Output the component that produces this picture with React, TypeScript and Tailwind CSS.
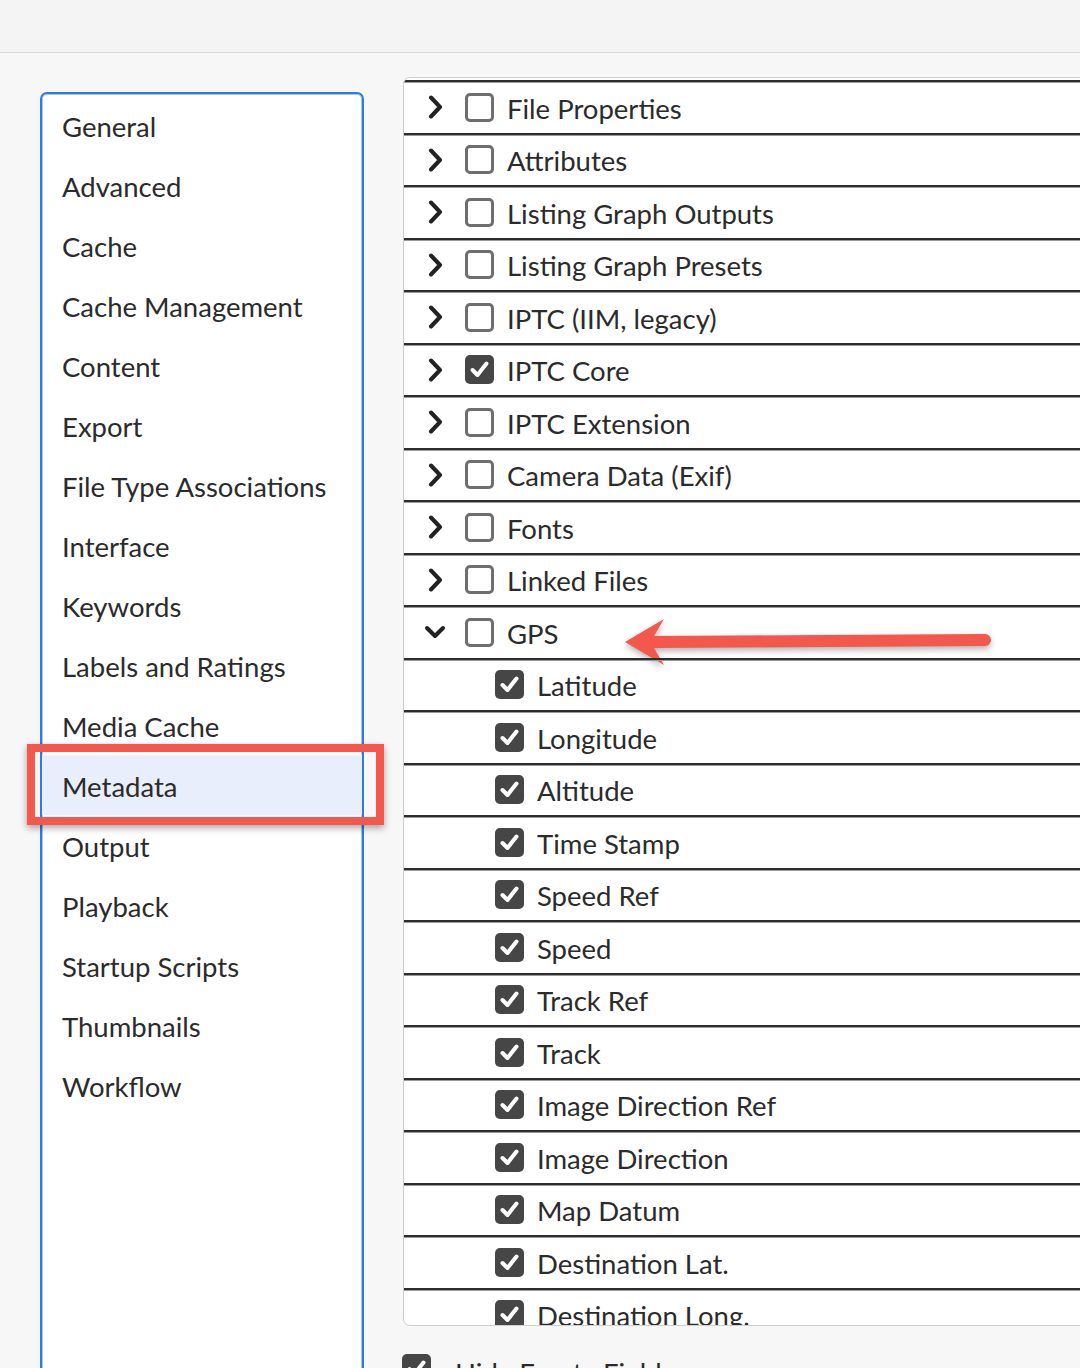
import React from 'react';

const prefs = [
  'General',
  'Advanced',
  'Cache',
  'Cache Management',
  'Content',
  'Export',
  'File Type Associations',
  'Interface',
  'Keywords',
  'Labels and Ratings',
  'Media Cache',
  'Metadata',
  'Output',
  'Playback',
  'Startup Scripts',
  'Thumbnails',
  'Workflow',
];

type Row = { label: string; checked: boolean; child?: boolean; open?: boolean };

const groups: Row[] = [
  { label: 'File Properties', checked: false },
  { label: 'Attributes', checked: false },
  { label: 'Listing Graph Outputs', checked: false },
  { label: 'Listing Graph Presets', checked: false },
  { label: 'IPTC (IIM, legacy)', checked: false },
  { label: 'IPTC Core', checked: true },
  { label: 'IPTC Extension', checked: false },
  { label: 'Camera Data (Exif)', checked: false },
  { label: 'Fonts', checked: false },
  { label: 'Linked Files', checked: false },
  { label: 'GPS', checked: false, open: true },
];

const gpsFields = [
  'Latitude',
  'Longitude',
  'Altitude',
  'Time Stamp',
  'Speed Ref',
  'Speed',
  'Track Ref',
  'Track',
  'Image Direction Ref',
  'Image Direction',
  'Map Datum',
  'Destination Lat.',
  'Destination Long.',
];

const rows: Row[] = [...groups, ...gpsFields.map((label) => ({ label, checked: true, child: true }))];

const Checkbox = ({ checked }: { checked: boolean }) =>
  checked ? (
    <span className="w-[29px] h-[29px] rounded-[5px] bg-[#464646] flex items-center justify-center flex-shrink-0">
      <svg width="29" height="29" viewBox="0 0 29 29">
        <path d="M7.5 15 L12.5 20 L21.5 8.5" fill="none" stroke="#fff" strokeWidth="4" strokeLinecap="round" strokeLinejoin="round" />
      </svg>
    </span>
  ) : (
    <span className="w-[29px] h-[29px] rounded-[5px] border-[3px] border-[#6e6e6e] bg-white flex-shrink-0" />
  );

const Chevron = ({ open }: { open?: boolean }) => (
  <svg width="24" height="24" viewBox="0 0 24 24" className="flex-shrink-0">
    {open ? (
      <path d="M4 8 L12 16 L20 8" fill="none" stroke="#222" strokeWidth="4" strokeLinecap="round" strokeLinejoin="round" />
    ) : (
      <path d="M8 2.5 L17 12 L8 21.5" fill="none" stroke="#222" strokeWidth="4" strokeLinecap="round" strokeLinejoin="round" />
    )}
  </svg>
);

export default function App() {
  return (
    <div className="relative w-[1080px] h-[1368px] overflow-hidden bg-[#f7f7f7] font-[Lato,sans-serif] text-[#2b2b2b]">
      {/* window title strip */}
      <div className="h-[53px] bg-[#f4f4f4] border-b border-[#d9d9d9]" />

      <div className="flex">
        {/* Preferences categories */}
        <div className="ml-[40px] mt-[39px] w-[324px] h-[1300px] bg-white border-2 border-[#2c7de0] rounded-t-[7px] shadow-[inset_0_0_0_1px_#a3c8f5] pt-[1px] flex-shrink-0">
          {prefs.map((p) => {
            const active = p === 'Metadata';
            return (
              <div
                key={p}
                className={`relative h-[60px] flex items-center pl-[20px] pt-[4px] text-[27.5px] ${active ? 'bg-[#e8eefb]' : ''}`}
              >
                {p}
                {active && (
                  <div className="absolute left-[-15px] top-[-11px] w-[357px] h-[81px] border-[8px] border-[#f4574b] shadow-[0_3px_7px_rgba(0,0,0,0.35)]" />
                )}
              </div>
            );
          })}
        </div>

        {/* Metadata panel */}
        <div className="ml-[39px] mt-[24px] flex flex-col flex-shrink-0">
          <div className="w-[720px] h-[1249px] bg-white border border-[#cfcfcf] rounded-[7px] overflow-hidden pt-[2px]">
            {rows.map((r) => (
              <div
                key={r.label}
                className="relative h-[52.5px] border-t-2 border-[#2d2d2d] shadow-[inset_0_1px_0_#9a9a9a] flex items-center text-[27.5px]"
              >
                {r.child ? (
                  <div className="flex items-center pl-[91px]">
                    <Checkbox checked={r.checked} />
                    <span className="ml-[13px] pt-[2px]">{r.label}</span>
                  </div>
                ) : (
                  <div className="flex items-center pl-[19px]">
                    <Chevron open={r.open} />
                    <span className="ml-[18px] flex">
                      <Checkbox checked={r.checked} />
                    </span>
                    <span className="ml-[13px] pt-[2px]">{r.label}</span>
                  </div>
                )}
                {r.open && (
                  <svg
                    className="absolute left-[214px] top-[-10px] drop-shadow-[0_3px_3px_rgba(0,0,0,0.3)]"
                    width="380"
                    height="70"
                    viewBox="0 0 380 70"
                  >
                    <path
                      d="M7 45 L46 22 Q40 32 36 39 L367 37 A6 6 0 0 1 367 49 L36 51 Q40 58 46 68 Z"
                      fill="#f4574b"
                    />
                  </svg>
                )}
              </div>
            ))}
          </div>

          <div className="flex items-start mt-[28px] -ml-[1px] text-[27.5px]">
            <Checkbox checked />
            <span className="ml-[24px] -mt-[2px]">Hide Empty Fields</span>
          </div>
        </div>
      </div>
    </div>
  );
}
